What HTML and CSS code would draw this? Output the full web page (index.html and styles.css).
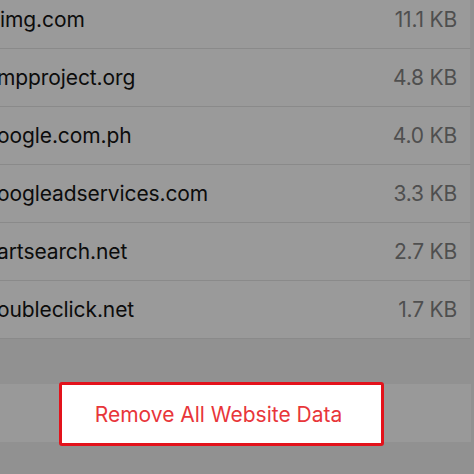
FILE: index.html
```html
<!DOCTYPE html>
<html>
<head>
<meta charset="utf-8">
<link rel="stylesheet" href="styles.css">
</head>
<body>
<div class="screen">
  <ul class="list">
    <li class="row"><span class="domain">img.com</span><span class="size">11.1 KB</span></li>
    <li class="row"><span class="domain cut">mpproject.org</span><span class="size">4.8 KB</span></li>
    <li class="row"><span class="domain cut">oogle.com.ph</span><span class="size">4.0 KB</span></li>
    <li class="row"><span class="domain cut">oogleadservices.com</span><span class="size">3.3 KB</span></li>
    <li class="row"><span class="domain cut">artsearch.net</span><span class="size">2.7 KB</span></li>
    <li class="row"><span class="domain cut">oubleclick.net</span><span class="size">1.7 KB</span></li>
  </ul>
  <div class="gap"></div>
  <div class="action-row">
    <div class="highlight">Remove All Website Data</div>
  </div>
</div>
</body>
</html>
```

FILE: styles.css
```css
html, body {
  margin: 0;
  padding: 0;
}
body {
  width: 474px;
  height: 474px;
  overflow: hidden;
  background: #919191;
  font-family: "Inter", "Roboto", "Liberation Sans", sans-serif;
}
.screen {
  display: flex;
  flex-direction: column;
}
.list {
  list-style: none;
  margin: -9px 0 0 0;
  padding: 0;
}
.row {
  height: 57px;
  border-bottom: 1px solid #8a8a8a;
  border-right: 1px solid #929292;
  margin-right: 3px;
  background: #9a9a9a;
  display: flex;
  align-items: center;
  justify-content: space-between;
  padding-right: 13px;
  overflow: hidden;
}
.domain {
  font-size: 21px;
  color: #0c0c0c;
  margin-left: 0;
  letter-spacing: -0.1px;
}
.domain.cut {
  margin-left: -3px;
}
.size {
  font-size: 21px;
  color: #4f4f4f;
  letter-spacing: -0.2px;
}
.gap {
  height: 45px;
}
.action-row {
  height: 58px;
  background: #999999;
  position: relative;
  margin-right: 3px;
}
.highlight {
  position: absolute;
  left: 59px;
  top: -2px;
  width: 313px;
  height: 58px;
  border: 3px solid #e3121b;
  border-radius: 3px;
  background: #ffffff;
  color: #e8363a;
  font-size: 21px;
  display: flex;
  align-items: center;
  justify-content: center;
  padding-right: 6px;
  box-sizing: content-box;
}
```
